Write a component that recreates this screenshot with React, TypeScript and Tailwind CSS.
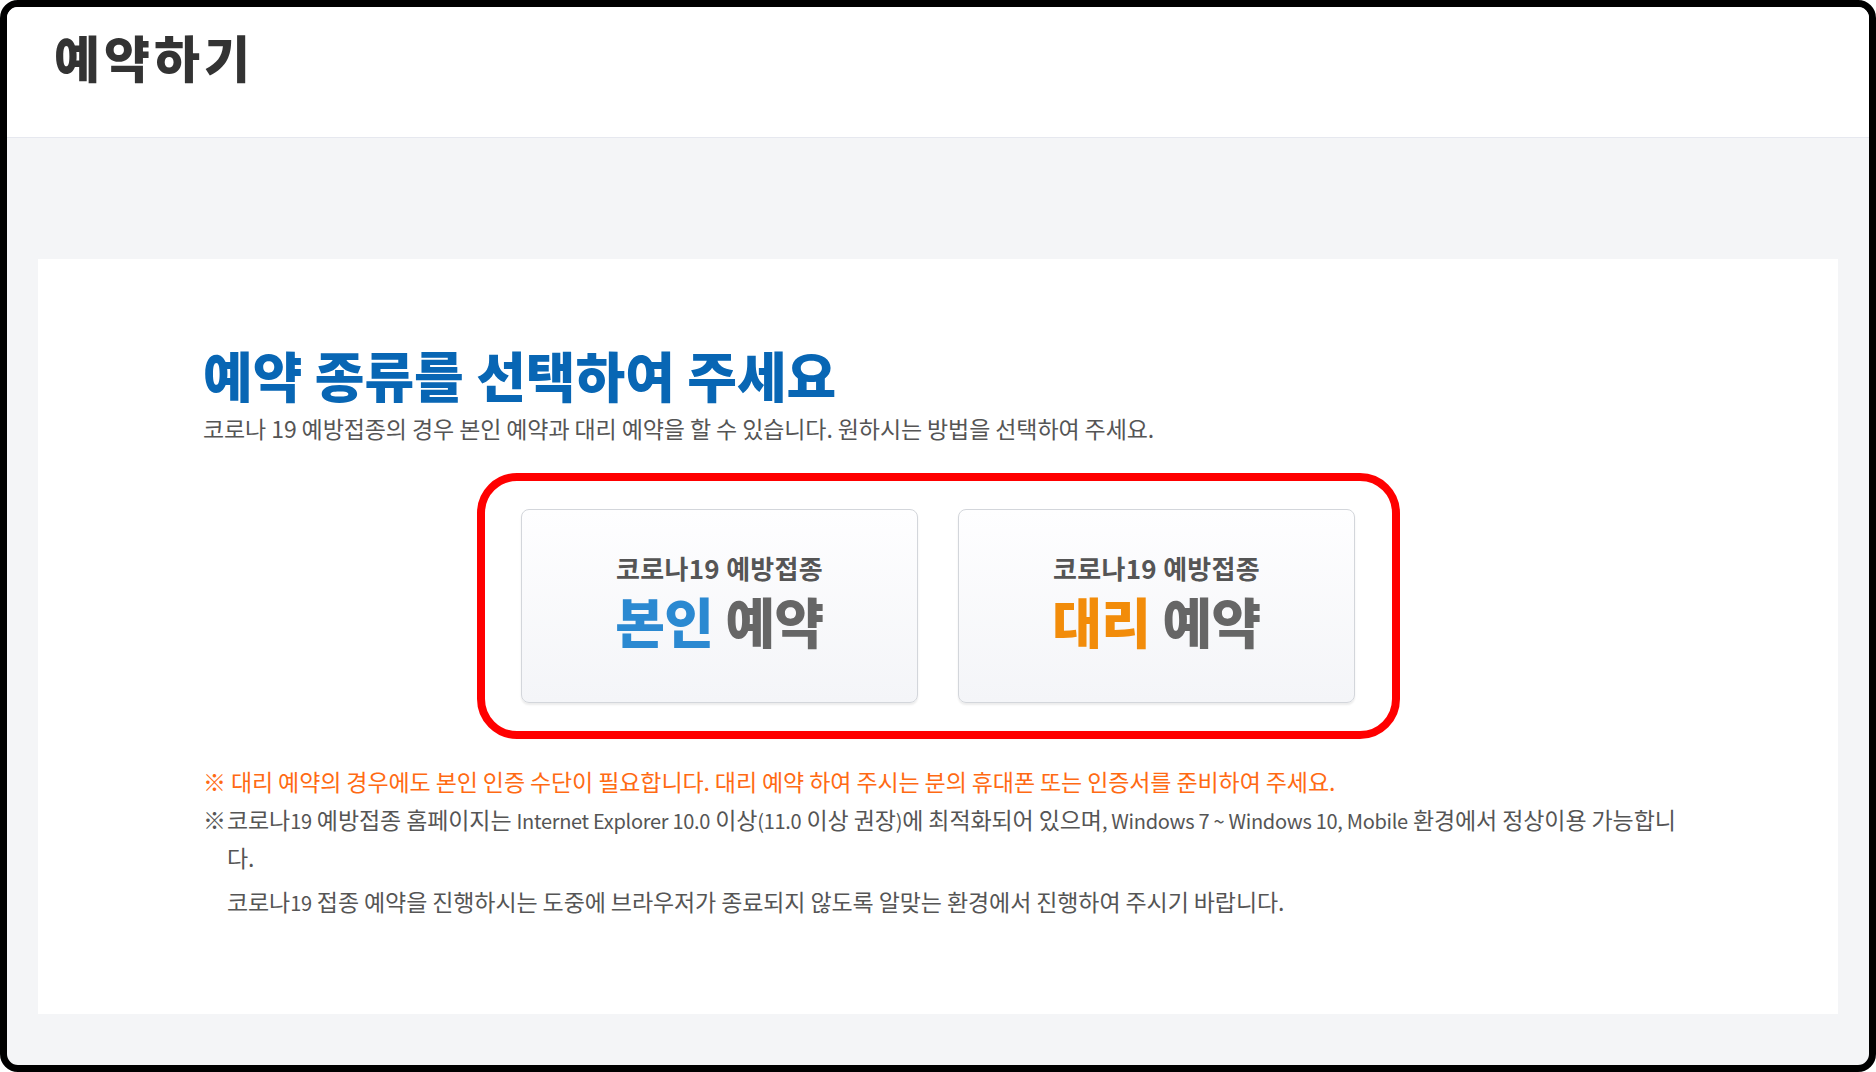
import React from "react";

const KR = { fontFamily: '"Noto Sans CJK KR", "Noto Sans", sans-serif' };

function ChoiceCard({ accent, accentClass }: { accent: string; accentClass: string }) {
  return (
    <button
      type="button"
      className="w-[397px] h-[194px] rounded-[8px] border border-[#d3d6db] bg-gradient-to-b from-[#fefeff] to-[#f4f5f8] shadow-[0_2px_2px_rgba(0,0,0,0.08)] flex flex-col items-center justify-start pt-[43px]"
    >
      <span className="text-[26px] leading-[30px] font-bold text-[#555555] tracking-[0.3px]">
        코로나19 예방접종
      </span>
      <span className="mt-[10px] text-[54px] leading-[56px] font-black tracking-[-0.5px] text-[#666666]">
        <span className={accentClass}>{accent}</span> 예약
      </span>
    </button>
  );
}

function Lat({ children }: { children: React.ReactNode }) {
  return <span className="text-[20px] tracking-[-0.3px]">{children}</span>;
}

export default function App() {
  return (
    <div className="w-[1876px] h-[1072px] bg-white" style={KR}>
      <div className="h-full border-[7px] border-black rounded-[18px] overflow-hidden flex flex-col bg-[#f4f5f7]">
        <header className="h-[131px] shrink-0 bg-white border-b border-[#e6e8ef] pl-[47px] pt-[19px]">
          <h1 className="text-[50px] leading-[60px] font-black text-[#333333] tracking-[4px]">예약하기</h1>
        </header>
        <main className="flex-1 px-[31px] pt-[121px] pb-[51px]">
          <section className="h-full bg-white px-[165px] pt-[84px]">
            <h2 className="text-[54px] leading-[64px] font-black text-[#0866b4] tracking-[0px]">
              예약 종류를 선택하여 주세요
            </h2>
            <p className="mt-[7px] text-[23px] leading-[28px] text-[#555555] tracking-[-0.1px]">
              코로나 19 예방접종의 경우 본인 예약과 대리 예약을 할 수 있습니다. 원하시는 방법을 선택하여 주세요.
            </p>
            <div className="mt-[31px] mx-auto w-[923px] h-[266px] border-[8px] border-[#ff0000] rounded-[40px] flex items-center justify-center gap-[40px]">
              <ChoiceCard accent="본인" accentClass="text-[#2b89d1]" />
              <ChoiceCard accent="대리" accentClass="text-[#f28c0a]" />
            </div>
            <div className="mt-[23px] text-[23px] tracking-[-0.1px]">
              <p className="leading-[38px] text-[#ff6a13] whitespace-nowrap">
                ※ 대리 예약의 경우에도 본인 인증 수단이 필요합니다. 대리 예약 하여 주시는 분의 휴대폰 또는 인증서를 준비하여 주세요.
              </p>
              <div className="mt-[1px] flex text-[#555555] leading-[37px]">
                <span className="w-[24px] shrink-0">※</span>
                <div>
                  <p className="whitespace-nowrap">
                    코로나<Lat>19</Lat> 예방접종 홈페이지는 <Lat>Internet Explorer 10.0</Lat> 이상<Lat>(11.0</Lat> 이상 권장<Lat>)</Lat>에 최적화되어 있으며<Lat>, Windows 7 ~ Windows 10, Mobile</Lat> 환경에서 정상이용 가능합니
                  </p>
                  <p>다.</p>
                  <p className="mt-[7px] whitespace-nowrap">
                    코로나<Lat>19</Lat> 접종 예약을 진행하시는 도중에 브라우저가 종료되지 않도록 알맞는 환경에서 진행하여 주시기 바랍니다.
                  </p>
                </div>
              </div>
            </div>
          </section>
        </main>
      </div>
    </div>
  );
}
